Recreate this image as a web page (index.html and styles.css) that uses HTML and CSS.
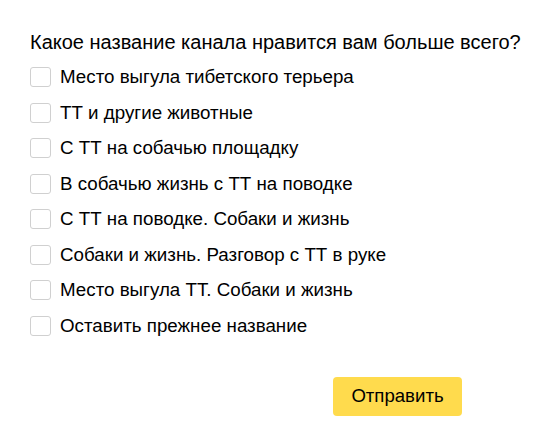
FILE: index.html
```html
<!DOCTYPE html>
<html lang="ru">
<head>
<meta charset="utf-8">
<link rel="stylesheet" href="styles.css">
</head>
<body>
<form class="poll">
  <div class="question">Какое название канала нравится вам больше всего?</div>
  <div class="options">
    <label class="option"><span class="box"></span><span class="label">Место выгула тибетского терьера</span></label>
    <label class="option"><span class="box"></span><span class="label">ТТ и другие животные</span></label>
    <label class="option"><span class="box"></span><span class="label">С ТТ на собачью площадку</span></label>
    <label class="option"><span class="box"></span><span class="label">В собачью жизнь с ТТ на поводке</span></label>
    <label class="option"><span class="box"></span><span class="label">С ТТ на поводке. Собаки и жизнь</span></label>
    <label class="option"><span class="box"></span><span class="label">Собаки и жизнь. Разговор с ТТ в руке</span></label>
    <label class="option"><span class="box"></span><span class="label">Место выгула ТТ. Собаки и жизнь</span></label>
    <label class="option"><span class="box"></span><span class="label">Оставить прежнее название</span></label>
  </div>
  <div class="actions">
    <button type="button" class="submit">Отправить</button>
  </div>
</form>
</body>
</html>
```
FILE: styles.css
```css
html, body {
  margin: 0;
  padding: 0;
  background: #fff;
}
body {
  font-family: "Liberation Sans", Arial, sans-serif;
  color: #000;
}
.poll {
  width: 432px;
  padding: 30px 0 0 30px;
}
.question {
  font-size: 20px;
  line-height: 24px;
  white-space: nowrap;
  margin-bottom: 13px;
}
.options {
  display: flex;
  flex-direction: column;
  gap: 15.5px;
}
.option {
  display: flex;
  align-items: center;
  height: 20px;
  font-size: 18.75px;
}
.box {
  width: 19px;
  height: 18px;
  border: 1px solid #d0d0d0;
  border-radius: 3px;
  margin-right: 9px;
  flex: none;
}
.actions {
  display: flex;
  justify-content: flex-end;
  margin-top: 41px;
}
.submit {
  width: 129px;
  height: 39px;
  border: none;
  border-radius: 4px;
  background: #ffdb4d;
  font-family: "Liberation Sans", Arial, sans-serif;
  font-size: 18.6px;
  color: #000;
  cursor: pointer;
}
```
